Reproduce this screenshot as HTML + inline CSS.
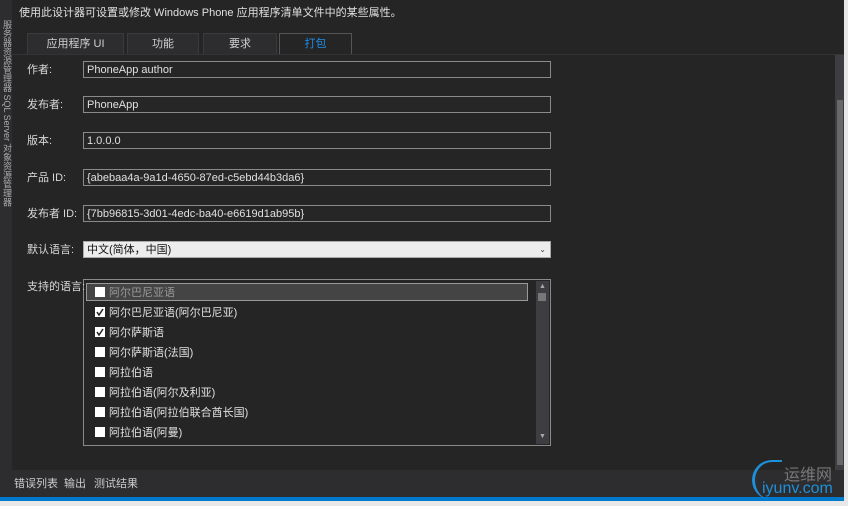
<!DOCTYPE html>
<html><head><meta charset="utf-8"><style>
*{margin:0;padding:0;box-sizing:border-box}
body{width:848px;height:506px;background:#e8e8e8;font-family:"Liberation Sans","Noto Sans CJK SC",sans-serif;font-size:11px;color:#d8d8d8;position:relative;overflow:hidden}
.abs{position:absolute}
.inp{position:absolute;left:83px;width:468px;height:17px;border:1px solid #8a8a8a;background:#262626;color:#e0e0e0;padding-left:3px;padding-top:1px;line-height:15px}
.lbl{position:absolute;left:27px;line-height:14px;z-index:2}
.item{position:absolute;left:95px;line-height:14px;color:#e0e0e0}
.cb{display:inline-block;width:10px;height:10px;background:#fff;vertical-align:-1px;margin-right:4px;position:relative}
.cb svg{position:absolute;left:0;top:0}
.tab{position:absolute;top:33px;height:22px;background:#2d2d30;border:1px solid #3a3a3d;text-align:center;line-height:20px;color:#d0d0d0}
</style></head><body>
<div class="abs" style="left:0;top:0;width:844px;height:497px;background:#252526"></div>
<div class="abs" style="left:0;top:0;width:12px;height:470px;background:#2d2d30"></div>
<div class="abs" style="left:1px;top:20px;width:10px;font-size:9px;line-height:9px;color:#aaa;writing-mode:vertical-rl">服务器资源管理器 SQL Server 对象资源管理器</div>
<div class="abs" style="left:19px;top:6px;line-height:14px;color:#e0e0e0">使用此设计器可设置或修改 Windows Phone 应用程序清单文件中的某些属性。</div>
<div class="tab" style="left:27px;width:97px">应用程序 UI</div>
<div class="tab" style="left:127px;width:72px">功能</div>
<div class="tab" style="left:203px;width:74px">要求</div>
<div class="tab" style="left:279px;width:73px;background:#252526;border-color:#555;color:#1e8ee8">打包</div>
<div class="abs" style="left:12px;top:54px;width:832px;height:1px;background:#333337"></div>
<div class="lbl" style="top:63px">作者:</div><div class="inp" style="top:61px">PhoneApp author</div>
<div class="lbl" style="top:98px">发布者:</div><div class="inp" style="top:96px">PhoneApp</div>
<div class="lbl" style="top:134px">版本:</div><div class="inp" style="top:132px">1.0.0.0</div>
<div class="lbl" style="top:171px">产品 ID:</div><div class="inp" style="top:169px">{abebaa4a-9a1d-4650-87ed-c5ebd44b3da6}</div>
<div class="lbl" style="top:207px">发布者 ID:</div><div class="inp" style="top:205px">{7bb96815-3d01-4edc-ba40-e6619d1ab95b}</div>
<div class="lbl" style="top:243px">默认语言:</div><div class="inp" style="top:241px;background:#ececec;color:#111;border-color:#aaa">中文(简体，中国)<span style="position:absolute;right:4px;top:0;font-size:8px;color:#444">⌄</span></div>
<div class="abs" style="left:83px;top:279px;width:468px;height:167px;border:1px solid #8a8a8a;background:#252526"></div>
<div class="lbl" style="top:280px">支持的语言:</div>
<div class="abs" style="left:86px;top:283px;width:442px;height:18px;border:1px solid #999;background:#444"></div>
<div class="abs" style="left:536px;top:281px;width:13px;height:163px;background:#3e3e42"></div>
<div class="abs" style="left:538px;top:293px;width:8px;height:8px;background:#777"></div>
<div class="abs" style="left:539px;top:283px;font-size:7px;color:#aaa">▲</div>
<div class="abs" style="left:539px;top:433px;font-size:7px;color:#aaa">▼</div>
<div class="item" style="top:286px;color:#999"><span class="cb"></span>阿尔巴尼亚语</div>
<div class="item" style="top:306px"><span class="cb"><svg width="10" height="10"><path d="M2 5 L4 8 L8 2" stroke="#222" stroke-width="1.5" fill="none"/></svg></span>阿尔巴尼亚语(阿尔巴尼亚)</div>
<div class="item" style="top:326px"><span class="cb"><svg width="10" height="10"><path d="M2 5 L4 8 L8 2" stroke="#222" stroke-width="1.5" fill="none"/></svg></span>阿尔萨斯语</div>
<div class="item" style="top:346px"><span class="cb"></span>阿尔萨斯语(法国)</div>
<div class="item" style="top:366px"><span class="cb"></span>阿拉伯语</div>
<div class="item" style="top:386px"><span class="cb"></span>阿拉伯语(阿尔及利亚)</div>
<div class="item" style="top:406px"><span class="cb"></span>阿拉伯语(阿拉伯联合酋长国)</div>
<div class="item" style="top:426px"><span class="cb"></span>阿拉伯语(阿曼)</div>
<div class="abs" style="left:835px;top:55px;width:9px;height:415px;background:#3e3e42"></div>
<div class="abs" style="left:837px;top:100px;width:6px;height:365px;background:#686868"></div>
<div class="abs" style="left:0;top:470px;width:844px;height:27px;background:#2d2d30"></div>
<div class="abs" style="left:14px;top:477px;line-height:14px;color:#ccc">错误列表</div>
<div class="abs" style="left:64px;top:477px;line-height:14px;color:#ccc">输出</div>
<div class="abs" style="left:94px;top:477px;line-height:14px;color:#ccc">测试结果</div>
<div class="abs" style="left:0;top:497px;width:844px;height:4px;background:#007acc"></div>
<div class="abs" style="left:752px;top:460px;width:30px;height:40px;border-left:3px solid #1e90d8;border-top:2px solid #1e90d8;border-radius:20px 0 0 20px"></div>
<div class="abs" style="left:784px;top:461px;font-size:16px;color:#777">运维网</div>
<div class="abs" style="left:762px;top:480px;font-size:16px;color:#1e90d8">iyunv.com</div>
</body></html>
